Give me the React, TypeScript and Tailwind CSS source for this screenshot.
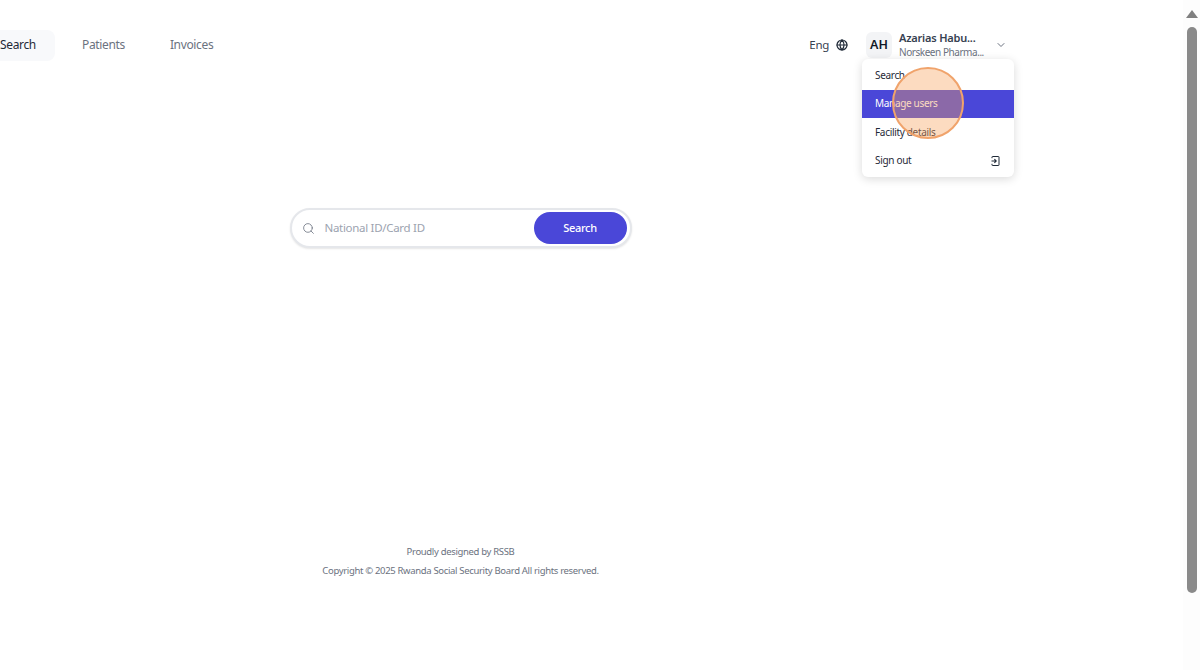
import { ChevronDown, Globe, Search } from "lucide-react";
import React from "react";

const font = "font-['Noto_Sans','Open_Sans',sans-serif]";

function SignOutIcon() {
  return (
    <svg width="9" height="10" viewBox="0 0 9 10" fill="none" stroke="#1f2937" strokeWidth="1">
      <path d="M1 2.2V1a.5.5 0 0 1 .5-.5h6a.5.5 0 0 1 .5.5v8a.5.5 0 0 1-.5.5h-6A.5.5 0 0 1 1 9V7.8" />
      <path d="M.5 5h4.5M3.4 3.2 5.2 5 3.4 6.8" strokeWidth="1.1" />
    </svg>
  );
}

export default function App() {
  return (
    <div className={`${font} flex h-[670px] w-[1200px] overflow-hidden bg-white`}>
      <main className="relative flex w-[1183px] flex-col">
        <header className="flex h-[90px] items-center justify-between pr-[176px]">
          <nav className="-ml-[16px] flex items-center text-[12px] tracking-[-0.35px]">
            <span className="flex h-[31px] w-[71px] items-center rounded-[8px] bg-[#f8f9fb] pl-[16px] text-[#1f2937]">Search</span>
            <span className="ml-[27px] text-[#6b7280]">Patients</span>
            <span className="ml-[45px] text-[#6b7280]">Invoices</span>
          </nav>
          <div className="flex items-center">
            <span className="text-[11.5px] tracking-[-0.3px] text-[#374151]">Eng</span>
            <Globe className="ml-[7px] text-[#1f2937]" size={12} strokeWidth={2.4} />
            <span className="ml-[18px] flex h-[26px] w-[26px] items-center justify-center rounded-[6px] bg-[#f3f4f6] text-[12.5px] font-semibold text-[#111827]">AH</span>
            <div className="ml-[7px] w-[92px] whitespace-nowrap leading-none">
              <p className="text-[11px] font-semibold leading-[14px] tracking-[-0.2px] text-[#374151]">Azarias Habu...</p>
              <p className="text-[10px] leading-[14px] tracking-[-0.45px] text-[#6b7280]">Norskeen Pharma...</p>
            </div>
            <ChevronDown className="ml-[4px] text-[#6b7280]" size={12} />
          </div>
        </header>

        <section className="flex h-[490px] w-[921px] flex-col items-center">
          <div className="mt-[118px] flex h-[40px] w-[342px] items-center rounded-full border-2 border-[#e5e7eb] bg-white pl-[10px] pr-[2px] shadow-[0_1px_2px_rgba(0,0,0,0.1)]">
            <Search className="text-[#6b7280]" size={13} strokeWidth={1.5} />
            <span className="ml-[10px] flex-1 text-[11.5px] tracking-[-0.3px] text-[#9ca3af]">National ID/Card ID</span>
            <span className="mr-[1px] flex h-[32px] w-[93px] items-center justify-center rounded-full bg-[#4a47d8] text-[11px] font-medium tracking-[-0.3px] text-white">Search</span>
          </div>
          <footer className="mt-[297px] flex flex-col items-center text-[9.5px] tracking-[-0.33px] text-[#6b7280]">
            <p className="leading-[14px]">Proudly designed by RSSB</p>
            <p className="mt-[5px] leading-[14px]">Copyright © 2025 Rwanda Social Security Board All rights reserved.</p>
          </footer>
        </section>

        <div className="absolute left-[862px] top-[59px] flex h-[118px] w-[151.5px] flex-col overflow-hidden rounded-[6px] bg-white pt-[2.5px] text-[10px] tracking-[-0.32px] text-[#1f2937] shadow-[0_2px_10px_rgba(0,0,0,0.15)]">
          <span className="flex h-[28px] items-center px-[13px]">Search</span>
          <span className="flex h-[28.5px] items-center bg-[#4a47d8] px-[13px] text-white">Manage users</span>
          <span className="flex h-[28px] items-center px-[13px]">Facility details</span>
          <span className="flex h-[29px] items-center justify-between pl-[13px] pr-[14px]">
            Sign out
            <SignOutIcon />
          </span>
        </div>

        <div className="absolute left-[892px] top-[67px] h-[72px] w-[72px] rounded-full border-[2px] border-[#f0a36b] bg-[rgba(248,160,90,0.38)]" />
      </main>

      <aside className="flex w-[17px] flex-col items-center bg-[#fdfdfd]">
        <svg className="mt-[10px]" width="12" height="8" viewBox="0 0 12 8"><path d="M6 0l6 8H0z" fill="#808080" /></svg>
        <div className="mt-[9px] h-[566px] w-[10px] rounded-t-[5px] rounded-b-[5px] bg-[#8a8a8a]" />
      </aside>
    </div>
  );
}
